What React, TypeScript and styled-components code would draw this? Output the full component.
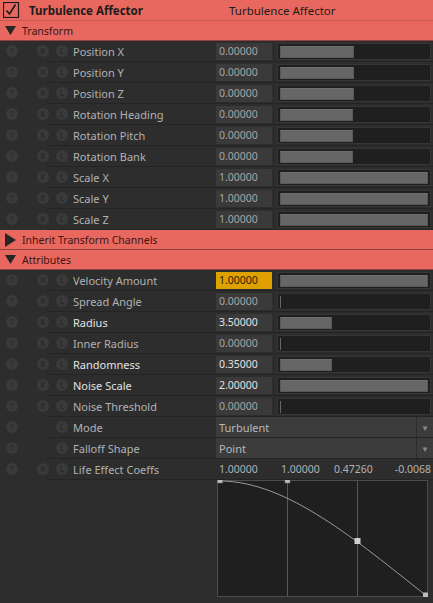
import React from "react";
import styled, { createGlobalStyle } from "styled-components";

const GlobalStyle = createGlobalStyle`
  html, body { margin: 0; padding: 0; background: #2d2d2d; }
  body { font-family: "Noto Sans", "Liberation Sans", sans-serif; font-size: 11px; }
  * { box-sizing: border-box; }
`;

const Panel = styled.div`
  width: 433px;
  height: 603px;
  background: #2d2d2d;
  overflow: hidden;
  display: flex;
  flex-direction: column;
`;

const TitleBar = styled.div`
  height: 21px;
  flex-shrink: 0;
  background: #e8685f;
  border-bottom: 1px solid #c85850;
  display: grid;
  grid-template-columns: 29px 200px 1fr;
  align-items: center;
  color: #1c1c1c;
`;

const CheckCell = styled.div`
  display: flex;
  align-items: center;
  padding-left: 3px;
`;

const TitleText = styled.span<{ $bold?: boolean }>`
  font-size: 11.5px;
  font-weight: ${(p) => (p.$bold ? 700 : 400)};
  white-space: nowrap;
`;

const SectionHeader = styled.div`
  height: 20px;
  flex-shrink: 0;
  background: #e8685f;
  border-bottom: 1px solid #8e423d;
  display: flex;
  align-items: center;
  gap: 6px;
  padding-left: 5px;
  color: #3a1512;
  font-size: 10.5px;
`;

const Row = styled.div`
  height: 21px;
  flex-shrink: 0;
  display: flex;
`;

const Gutter = styled.div`
  width: 47px;
  flex-shrink: 0;
  display: flex;
  align-items: center;
  padding-left: 6px;
  padding-bottom: 1px;
`;

const Main = styled.div`
  flex: 1;
  display: flex;
  align-items: center;
  padding-left: 9px;
  border-bottom: 1px solid #242424;
  min-width: 0;
`;

const Dot = styled.span<{ $gap?: number; $hidden?: boolean }>`
  width: 12px;
  height: 12px;
  border-radius: 50%;
  flex-shrink: 0;
  margin-left: ${(p) => p.$gap ?? 0}px;
  background: #3a3a3a;
  color: #2c2c2c;
  font-size: 8px;
  font-weight: 700;
  display: flex;
  align-items: center;
  justify-content: center;
  line-height: 1;
  visibility: ${(p) => (p.$hidden ? "hidden" : "visible")};
`;

const Label = styled.span<{ $bright?: boolean }>`
  width: 143px;
  flex-shrink: 0;
  margin-left: 5px;
  color: ${(p) => (p.$bright ? "#e2e2e2" : "#b2b2b2")};
  white-space: nowrap;
  overflow: hidden;
`;

const ValueBox = styled.div<{ $active?: boolean; $bright?: boolean }>`
  width: 56px;
  height: 17px;
  flex-shrink: 0;
  background: ${(p) => (p.$active ? "#dfa100" : "#3a3a3a")};
  color: ${(p) => (p.$active ? "#2a2000" : p.$bright ? "#e2e2e2" : "#a5a5a5")};
  display: flex;
  align-items: center;
  padding-left: 3px;
  font-size: 10.5px;
`;

const Track = styled.div`
  flex: 1;
  height: 17px;
  margin-left: 5px;
  margin-right: 2px;
  background: #1f1f1f;
  border: 1px solid #363636;
  padding: 2px 2px 1px;
  display: flex;
`;

const Fill = styled.div`
  height: 100%;
  background: #666666;
  border: 1px solid #585858;
  border-top-color: #6e6e6e;
`;

const Dropdown = styled.div`
  flex: 1;
  height: 20px;
  display: flex;
  background: #3c3c3c;
  color: #b8b8b8;
`;

const DropText = styled.span`
  flex: 1;
  display: flex;
  align-items: center;
  padding-left: 3px;
`;

const DropArrow = styled.span`
  width: 17px;
  border-left: 1px solid #2d2d2d;
  display: flex;
  align-items: center;
  justify-content: center;
  color: #8a8a8a;
  font-size: 8px;
`;

const Coeffs = styled.div`
  flex: 1;
  display: grid;
  grid-template-columns: 62px 53px 1fr auto;
  padding-left: 3px;
  padding-right: 2px;
  color: #b2b2b2;
  font-size: 10.5px;
`;

const GraphRow = styled.div`
  display: grid;
  grid-template-columns: 217px 211px;
`;

const Check = () => (
  <svg width="17" height="16" viewBox="0 0 17 16">
    <rect x="0.5" y="0.5" width="15" height="15" fill="none" stroke="#1a1a1a" strokeWidth="1.2" />
    <path d="M3.5 8.5 L6.5 12 L12.5 2.5" fill="none" stroke="#1a1a1a" strokeWidth="1.6" />
  </svg>
);

const TriDown = () => (
  <svg width="11" height="9" viewBox="0 0 11 9">
    <path d="M0 0 H11 L5.5 9 Z" fill="#262626" />
  </svg>
);

const TriRight = () => (
  <svg width="11" height="14" viewBox="0 0 11 14">
    <path d="M0 0 L11 7 L0 14 Z" fill="#262626" />
  </svg>
);

type Param = {
  label: string;
  value: string;
  fill: number;
  bright?: boolean;
  active?: boolean;
};

const transform: Param[] = [
  { label: "Position X", value: "0.00000", fill: 0.5 },
  { label: "Position Y", value: "0.00000", fill: 0.5 },
  { label: "Position Z", value: "0.00000", fill: 0.5 },
  { label: "Rotation Heading", value: "0.00000", fill: 0.49 },
  { label: "Rotation Pitch", value: "0.00000", fill: 0.49 },
  { label: "Rotation Bank", value: "0.00000", fill: 0.49 },
  { label: "Scale X", value: "1.00000", fill: 1 },
  { label: "Scale Y", value: "1.00000", fill: 1 },
  { label: "Scale Z", value: "1.00000", fill: 1 },
];

const attributes: Param[] = [
  { label: "Velocity Amount", value: "1.00000", fill: 1, active: true },
  { label: "Spread Angle", value: "0.00000", fill: 0 },
  { label: "Radius", value: "3.50000", fill: 0.35, bright: true },
  { label: "Inner Radius", value: "0.00000", fill: 0 },
  { label: "Randomness", value: "0.35000", fill: 0.35, bright: true },
  { label: "Noise Scale", value: "2.00000", fill: 1, bright: true },
  { label: "Noise Threshold", value: "0.00000", fill: 0 },
];

const Lead = ({ k = true }: { k?: boolean }) => (
  <Gutter>
    <Dot>?</Dot>
    <Dot $gap={19} $hidden={!k}>K</Dot>
  </Gutter>
);

const ParamRow = ({ p }: { p: Param }) => (
  <Row>
    <Lead />
    <Main>
      <Dot>L</Dot>
      <Label $bright={p.bright}>{p.label}</Label>
      <ValueBox $active={p.active} $bright={p.bright}>{p.value}</ValueBox>
      <Track>
        <Fill style={p.fill > 0 ? { width: `${p.fill * 100}%` } : { width: "1px", border: "none" }} />
      </Track>
    </Main>
  </Row>
);

const DropRow = ({ label, value }: { label: string; value: string }) => (
  <Row>
    <Lead k={false} />
    <Main>
      <Dot>L</Dot>
      <Label>{label}</Label>
      <Dropdown>
        <DropText>{value}</DropText>
        <DropArrow>▼</DropArrow>
      </Dropdown>
    </Main>
  </Row>
);

const Graph = () => (
  <svg width="211" height="117" viewBox="0 0 211 117">
    <rect x="0.5" y="0.5" width="210" height="116" fill="#1f1f1f" stroke="#4c4c4c" />
    <line x1="70.5" y1="1" x2="70.5" y2="116" stroke="#575757" />
    <line x1="140.5" y1="1" x2="140.5" y2="116" stroke="#575757" />
    <path d="M3 1 C70 1 140 61 209 115.5" fill="none" stroke="#9a9a9a" strokeWidth="1" />
    <rect x="0.5" y="-1" width="5" height="4" fill="#bdbdbd" stroke="#777" strokeWidth="0.5" />
    <rect x="68" y="-1" width="5" height="4" fill="#bdbdbd" stroke="#777" strokeWidth="0.5" />
    <rect x="137.5" y="58" width="6" height="6" fill="#cfcfcf" />
    <rect x="206" y="112.5" width="5" height="5" fill="#bdbdbd" />
  </svg>
);

export default function App() {
  return (
    <>
      <GlobalStyle />
      <Panel>
        <TitleBar>
          <CheckCell>
            <Check />
          </CheckCell>
          <TitleText $bold>Turbulence Affector</TitleText>
          <TitleText>Turbulence Affector</TitleText>
        </TitleBar>
        <SectionHeader>
          <TriDown />
          <span>Transform</span>
        </SectionHeader>
        {transform.map((p) => (
          <ParamRow key={p.label} p={p} />
        ))}
        <SectionHeader>
          <TriRight />
          <span>Inherit Transform Channels</span>
        </SectionHeader>
        <SectionHeader>
          <TriDown />
          <span>Attributes</span>
        </SectionHeader>
        {attributes.map((p) => (
          <ParamRow key={p.label} p={p} />
        ))}
        <DropRow label="Mode" value="Turbulent" />
        <DropRow label="Falloff Shape" value="Point" />
        <Row>
          <Lead />
          <Main>
            <Dot>L</Dot>
            <Label>Life Effect Coeffs</Label>
            <Coeffs>
              <span>1.00000</span>
              <span>1.00000</span>
              <span>0.47260</span>
              <span>-0.0068</span>
            </Coeffs>
          </Main>
        </Row>
        <GraphRow>
          <span />
          <Graph />
        </GraphRow>
      </Panel>
    </>
  );
}
